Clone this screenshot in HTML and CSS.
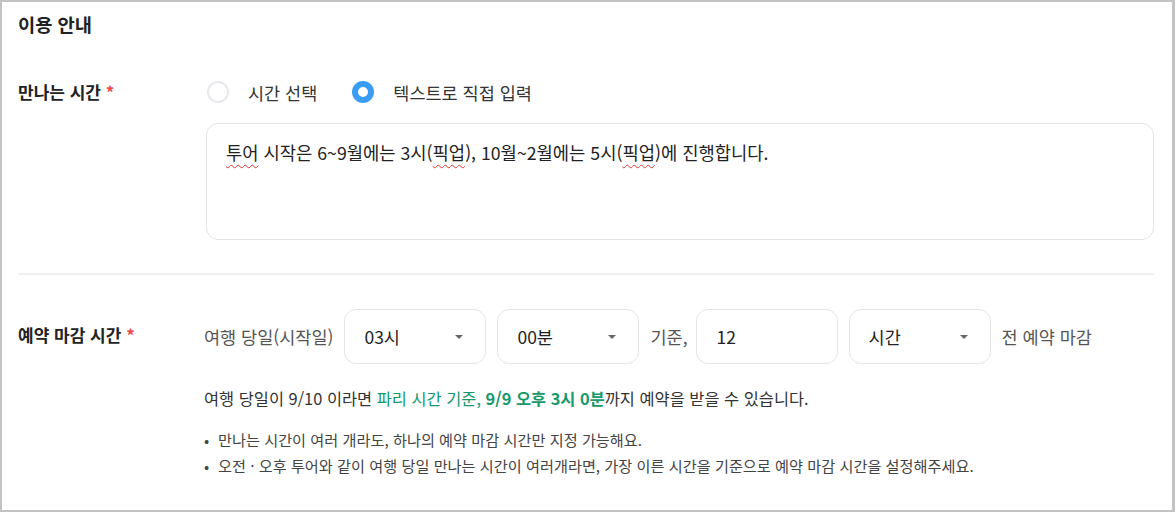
FILE: index.html
```html
<!DOCTYPE html>
<html lang="ko">
<head>
<meta charset="utf-8">
<link rel="stylesheet" href="styles.css">
</head>
<body>
<div class="frame">
  <h2 class="title">이용 안내</h2>

  <div class="row row-meet">
    <div class="label">만나는 시간 <span class="req">*</span></div>
    <div class="content">
      <div class="radios">
        <label class="radio"><span class="dot"></span><span>시간 선택</span></label>
        <label class="radio checked"><span class="dot"></span><span>텍스트로 직접 입력</span></label>
      </div>
      <div class="textbox"><span class="typo">투어</span> 시작은 6~9월에는 3시(<span class="typo">픽업</span>), 10월~2월에는 5시(<span class="typo">픽업</span>)에 진행합니다.</div>
    </div>
  </div>

  <hr class="divider">

  <div class="row row-deadline">
    <div class="label">예약 마감 시간 <span class="req">*</span></div>
    <div class="content">
      <div class="controls">
        <span class="muted">여행 당일(시작일)</span>
        <div class="select"><span>03시</span><span class="caret"></span></div>
        <div class="select"><span>00분</span><span class="caret"></span></div>
        <span class="muted tight">기준,</span>
        <div class="input">12</div>
        <div class="select"><span>시간</span><span class="caret"></span></div>
        <span class="muted">전 예약 마감</span>
      </div>
      <p class="helper">여행 당일이 9/10 이라면 <span class="green">파리 시간 기준, <b>9/9 오후 3시 0분</b></span>까지 예약을 받을 수 있습니다.</p>
      <ul class="notes">
        <li>만나는 시간이 여러 개라도, 하나의 예약 마감 시간만 지정 가능해요.</li>
        <li>오전 · 오후 투어와 같이 여행 당일 만나는 시간이 여러개라면, 가장 이른 시간을 기준으로 예약 마감 시간을 설정해주세요.</li>
      </ul>
    </div>
  </div>
</div>
</body>
</html>
```

FILE: styles.css
```css
* { box-sizing: border-box; }
html, body { margin: 0; padding: 0; }
body {
  font-family: "Noto Sans CJK KR", "Noto Sans", sans-serif;
  color: #222;
  background: #fff;
}
.frame {
  width: 1175px;
  height: 512px;
  border-style: solid;
  border-color: #c3c3c3;
  border-width: 2px 3px 2px 2px;
  padding: 0 18px 0 16px;
  overflow: hidden;
}
.title {
  margin: 0;
  padding-top: 9px;
  font-size: 18.7px;
  line-height: 26px;
  font-weight: 700;
  color: #222;
}
.row { display: flex; }
.label {
  width: 188px;
  flex: none;
  font-size: 17px;
  font-weight: 700;
  line-height: 22px;
  color: #222;
  white-space: nowrap;
}
.req { color: #f0494c; }
.content { flex: 1; min-width: 0; }

.row-meet { margin-top: 44px; }
.radios {
  display: flex;
  align-items: center;
  gap: 35px;
  height: 22px;
  margin-left: 1px;
}
.radio {
  display: flex;
  align-items: center;
  gap: 19px;
  font-size: 17.5px;
  color: #333;
}
.dot {
  width: 22px;
  height: 22px;
  border-radius: 50%;
  border: 2px solid #e6e8ec;
  background: #fff;
  flex: none;
}
.radio.checked .dot {
  border: 6px solid #3a9cf2;
}
.textbox {
  margin-top: 20px;
  height: 117px;
  border: 1px solid #e3e5e9;
  border-radius: 12px;
  padding: 16px 19px;
  font-size: 17.7px;
  line-height: 24px;
  color: #222;
  white-space: nowrap;
}
.typo {
  text-decoration: underline wavy #e53935;
  text-decoration-thickness: 1px;
  text-underline-offset: 4px;
}
.divider {
  margin: 33px 0 0 0;
  border: 0;
  border-top: 2px solid #eef0f2;
}

.row-deadline { margin-top: 34px; }
.row-deadline .label { padding-top: 15px; }
.controls {
  display: flex;
  align-items: center;
  gap: 11px;
  margin-left: -2px;
  white-space: nowrap;
}
.muted { font-size: 17.5px; color: #555; }
.muted.tight { margin-right: -3px; }
.select, .input {
  width: 142px;
  height: 55px;
  flex: none;
  border: 1px solid #e3e5e9;
  border-radius: 12px;
  display: flex;
  align-items: center;
  justify-content: space-between;
  padding: 0 22px 0 19px;
  font-size: 17.5px;
  color: #222;
}
.input { padding-left: 20px; }
.caret {
  width: 0;
  height: 0;
  border-left: 4.5px solid transparent;
  border-right: 4.5px solid transparent;
  border-top: 4.5px solid #666;
}
.helper {
  margin: 23px 0 0 -2px;
  font-size: 16.4px;
  line-height: 22px;
  color: #333;
  white-space: nowrap;
}
.green { color: #16996b; }
.green b { font-weight: 700; }
.notes {
  margin: 17px 0 0 -2px;
  padding: 0;
  list-style: none;
  font-size: 15.2px;
  line-height: 26px;
  color: #444;
  white-space: nowrap;
}
.notes li { display: flex; }
.notes li::before {
  content: "•";
  width: 14px;
  flex: none;
  color: #444;
}
```
